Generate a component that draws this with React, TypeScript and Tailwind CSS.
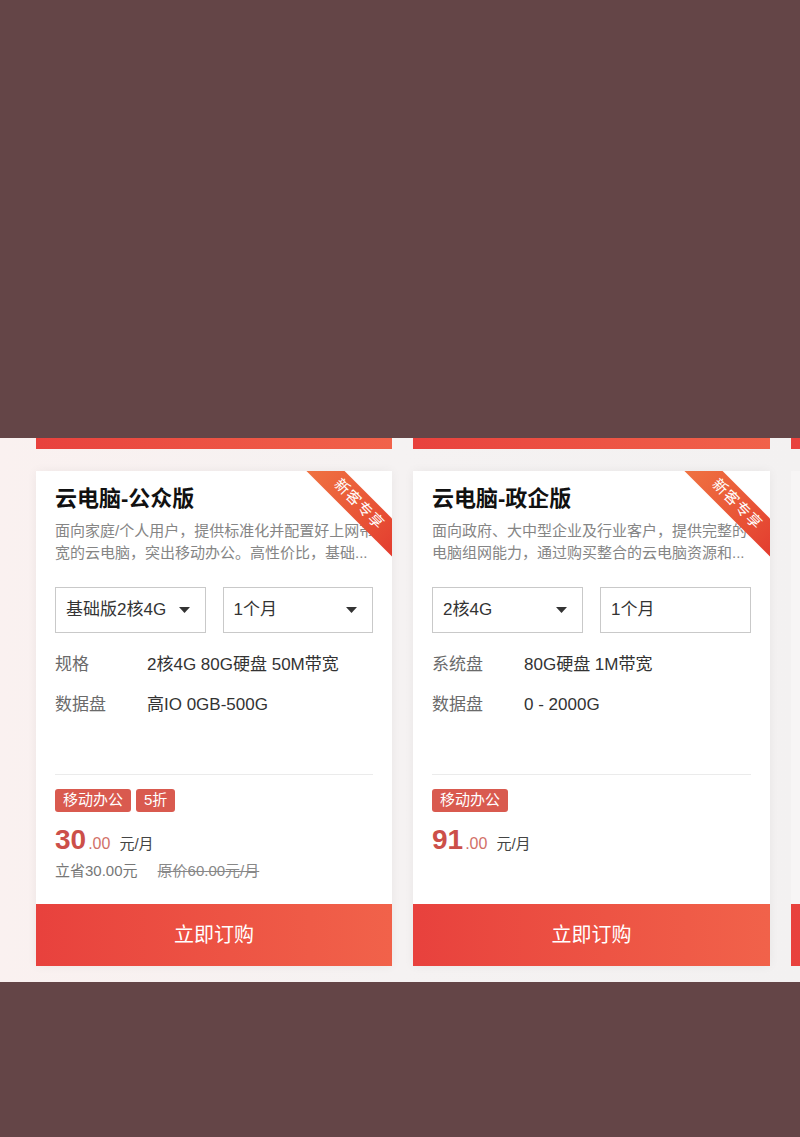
import React from "react";

const font = { fontFamily: '"Liberation Sans", "Noto Sans CJK SC", sans-serif' };

function Caret() {
  return (
    <svg width="11" height="6" viewBox="0 0 11 6" className="shrink-0">
      <path d="M0 0 L11 0 L5.5 6 Z" fill="#333" />
    </svg>
  );
}

function Select({ label, caret }: { label: string; caret: boolean }) {
  return (
    <div className="flex h-[46px] w-[151px] items-center justify-between border border-[#c9c9c9] pl-[10px] pr-[15px] text-[17px] text-[#333]">
      <span>{label}</span>
      {caret && <Caret />}
    </div>
  );
}

function Ribbon() {
  return (
    <div className="pointer-events-none absolute right-0 top-0 z-10 h-[86px] w-[86px] overflow-hidden">
      <div className="absolute left-[-13px] top-[20px] flex h-[27px] w-[132px] rotate-45 items-center justify-center bg-gradient-to-r from-[#f07442] to-[#e2382e] text-[15px] tracking-[1px] text-white">
        新客专享
      </div>
    </div>
  );
}

type CardProps = {
  width: string;
  title: string;
  desc: [string, string];
  sel1: string;
  sel2: string;
  sel2Caret: boolean;
  specs: [string, string][];
  tags: string[];
  price: string;
  savings?: [string, string];
};

function Card(p: CardProps) {
  return (
    <div
      className={`relative flex h-[495px] shrink-0 flex-col bg-white shadow-[0_0_10px_rgba(0,0,0,0.05)] ${p.width}`}
    >
      <Ribbon />
      <div className="flex flex-col px-[19px] pt-[13px]">
        <div className="h-[30px] text-[22px] font-bold leading-[30px] text-[#111]">{p.title}</div>
        <div className="mt-[6px] text-[15px] leading-[22px] text-[#858585]">
          <div className="whitespace-nowrap">{p.desc[0]}</div>
          <div className="whitespace-nowrap">{p.desc[1]}</div>
        </div>
        <div className="mt-[23px] flex gap-[17px]">
          <Select label={p.sel1} caret />
          <Select label={p.sel2} caret={p.sel2Caret} />
        </div>
        <div className="mt-[12px] flex flex-col">
          {p.specs.map(([k, v]) => (
            <div key={k} className="flex h-[40px] items-center text-[17px]">
              <span className="w-[92px] text-[#6a6a6a]">{k}</span>
              <span className="text-[#333]">{v}</span>
            </div>
          ))}
        </div>
        <div className="mt-[49px] h-px bg-[#ebebeb]" />
        <div className="mt-[14px] flex gap-[5px]">
          {p.tags.map((t) => (
            <span
              key={t}
              className="flex h-[23px] items-center rounded-[3px] bg-[#d95a4f] px-[8px] text-[15px] text-white"
            >
              {t}
            </span>
          ))}
        </div>
        <div className="mt-[10px] flex h-[36px] items-baseline leading-[36px]">
          <span className="text-[28px] font-bold text-[#cc4f49]">{p.price}</span>
          <span className="ml-[2px] text-[16px] text-[#d27067]">.00</span>
          <span className="ml-[9px] text-[15px] text-[#444]">元/月</span>
        </div>
        {p.savings && (
          <div className="mt-[3px] flex h-[20px] items-center text-[15px] text-[#777]">
            <span>{p.savings[0]}</span>
            <span className="ml-[20px] text-[#888] line-through">{p.savings[1]}</span>
          </div>
        )}
      </div>
      <div className="mt-auto flex h-[62px] items-center justify-center bg-gradient-to-r from-[#e8413d] to-[#f1624a] text-[20px] text-white">
        立即订购
      </div>
    </div>
  );
}

export default function App() {
  return (
    <div style={font} className="flex h-[1137px] w-[800px] flex-col overflow-hidden bg-[#644547]">
      <div className="h-[438px] shrink-0" />
      <div className="flex h-[544px] shrink-0 flex-col overflow-hidden bg-gradient-to-r from-[#faf1f0] via-[#f5f2f2] to-[#f3f1f1]">
        <div className="flex h-[11px] shrink-0 gap-[21px] pl-[36px]">
          <div className="h-full w-[356px] shrink-0 bg-gradient-to-r from-[#e8413d] to-[#f1624a]" />
          <div className="h-full w-[357px] shrink-0 bg-gradient-to-r from-[#e8413d] to-[#f1624a]" />
          <div className="h-full w-[356px] shrink-0 bg-gradient-to-r from-[#e8413d] to-[#f1624a]" />
        </div>
        <div className="mt-[22px] flex gap-[21px] pl-[36px]">
          <Card
            width="w-[356px]"
            title="云电脑-公众版"
            desc={["面向家庭/个人用户，提供标准化并配置好上网带", "宽的云电脑，突出移动办公。高性价比，基础..."]}
            sel1="基础版2核4G"
            sel2="1个月"
            sel2Caret
            specs={[
              ["规格", "2核4G 80G硬盘 50M带宽"],
              ["数据盘", "高IO 0GB-500G"],
            ]}
            tags={["移动办公", "5折"]}
            price="30"
            savings={["立省30.00元", "原价60.00元/月"]}
          />
          <Card
            width="w-[357px]"
            title="云电脑-政企版"
            desc={["面向政府、大中型企业及行业客户，提供完整的", "电脑组网能力，通过购买整合的云电脑资源和..."]}
            sel1="2核4G"
            sel2="1个月"
            sel2Caret={false}
            specs={[
              ["系统盘", "80G硬盘 1M带宽"],
              ["数据盘", "0 - 2000G"],
            ]}
            tags={["移动办公"]}
            price="91"
          />
          <div className="flex h-[495px] w-[356px] shrink-0 flex-col bg-[#f7f5f5]">
            <div className="mt-auto h-[62px] bg-gradient-to-r from-[#e8413d] to-[#f1624a]" />
          </div>
        </div>
      </div>
    </div>
  );
}
